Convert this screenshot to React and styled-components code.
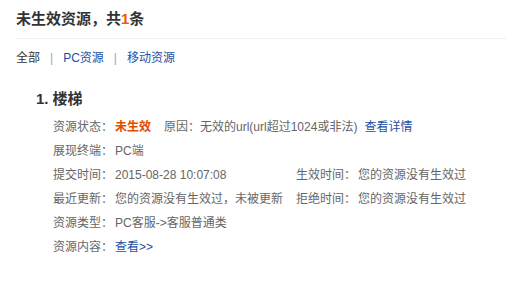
import React from 'react'
import styled, { createGlobalStyle } from 'styled-components'

const GlobalStyle = createGlobalStyle`
  body {
    margin: 0;
    background: #fff;
    font-family: "Liberation Sans", "Noto Sans CJK SC", sans-serif;
    font-size: 12px;
    color: #666;
  }
`

const Page = styled.div`
  padding-left: 16px;
`

const Title = styled.h2`
  margin: 0;
  height: 38px;
  line-height: 38px;
  font-size: 15px;
  font-weight: bold;
  color: #333;
  border-bottom: 1px solid #f0f0f0;
`

const Count = styled.span`
  color: #f25a00;
`

const Tabs = styled.div`
  display: flex;
  align-items: center;
  margin-top: 7px;
  line-height: 24px;
`

const Tab = styled.span`
  color: ${({ $active }) => ($active ? '#333' : '#1d4fa5')};
  cursor: pointer;
`

const Sep = styled.span`
  margin: 0 10px;
  color: #9aa6c0;
`

const Item = styled.div`
  margin-top: 17px;
  padding-left: 20px;
`

const ItemTitle = styled.h3`
  margin: 0;
  line-height: 24px;
  font-size: 15px;
  font-weight: bold;
  color: #333;
`

const Index = styled.span`
  margin-right: 4px;
`

const Fields = styled.div`
  margin-top: 4px;
  padding-left: 17px;
`

const Row = styled.div`
  display: flex;
  line-height: 24px;
  white-space: nowrap;
`

const Cell = styled.div`
  display: flex;
  flex-shrink: 0;
  width: ${({ $first }) => ($first ? '243px' : 'auto')};
`

const Label = styled.span`
  width: 62px;
  flex-shrink: 0;
  color: #666;
`

const Value = styled.span`
  color: #666;
`

const Status = styled.span`
  color: #e24c00;
  font-weight: bold;
  margin-right: 13px;
`

const Link = styled.a`
  color: #1d4fa5;
  text-decoration: none;
  margin-left: ${({ $gap }) => $gap || 0}px;
  cursor: pointer;
`

const Field = ({ label, children, first }) => (
  <Cell $first={first}>
    <Label>{label}</Label>
    <Value>{children}</Value>
  </Cell>
)

const App = () => {
  return (
    <Page>
      <GlobalStyle />
      <Title>
        未生效资源，共<Count>1</Count>条
      </Title>
      <Tabs>
        <Tab $active>全部</Tab>
        <Sep>|</Sep>
        <Tab>PC资源</Tab>
        <Sep>|</Sep>
        <Tab>移动资源</Tab>
      </Tabs>
      <Item>
        <ItemTitle>
          <Index>1.</Index>楼梯
        </ItemTitle>
        <Fields>
          <Row>
            <Field label="资源状态：">
              <Status>未生效</Status>
              原因：无效的url(url超过1024或非法)
              <Link $gap={7}>查看详情</Link>
            </Field>
          </Row>
          <Row>
            <Field label="展现终端：" first>PC端</Field>
          </Row>
          <Row>
            <Field label="提交时间：" first>2015-08-28 10:07:08</Field>
            <Field label="生效时间：">您的资源没有生效过</Field>
          </Row>
          <Row>
            <Field label="最近更新：" first>您的资源没有生效过，未被更新</Field>
            <Field label="拒绝时间：">您的资源没有生效过</Field>
          </Row>
          <Row>
            <Field label="资源类型：" first>PC客服-&gt;客服普通类</Field>
          </Row>
          <Row>
            <Field label="资源内容：" first>
              <Link>查看&gt;&gt;</Link>
            </Field>
          </Row>
        </Fields>
      </Item>
    </Page>
  )
}

export default App
